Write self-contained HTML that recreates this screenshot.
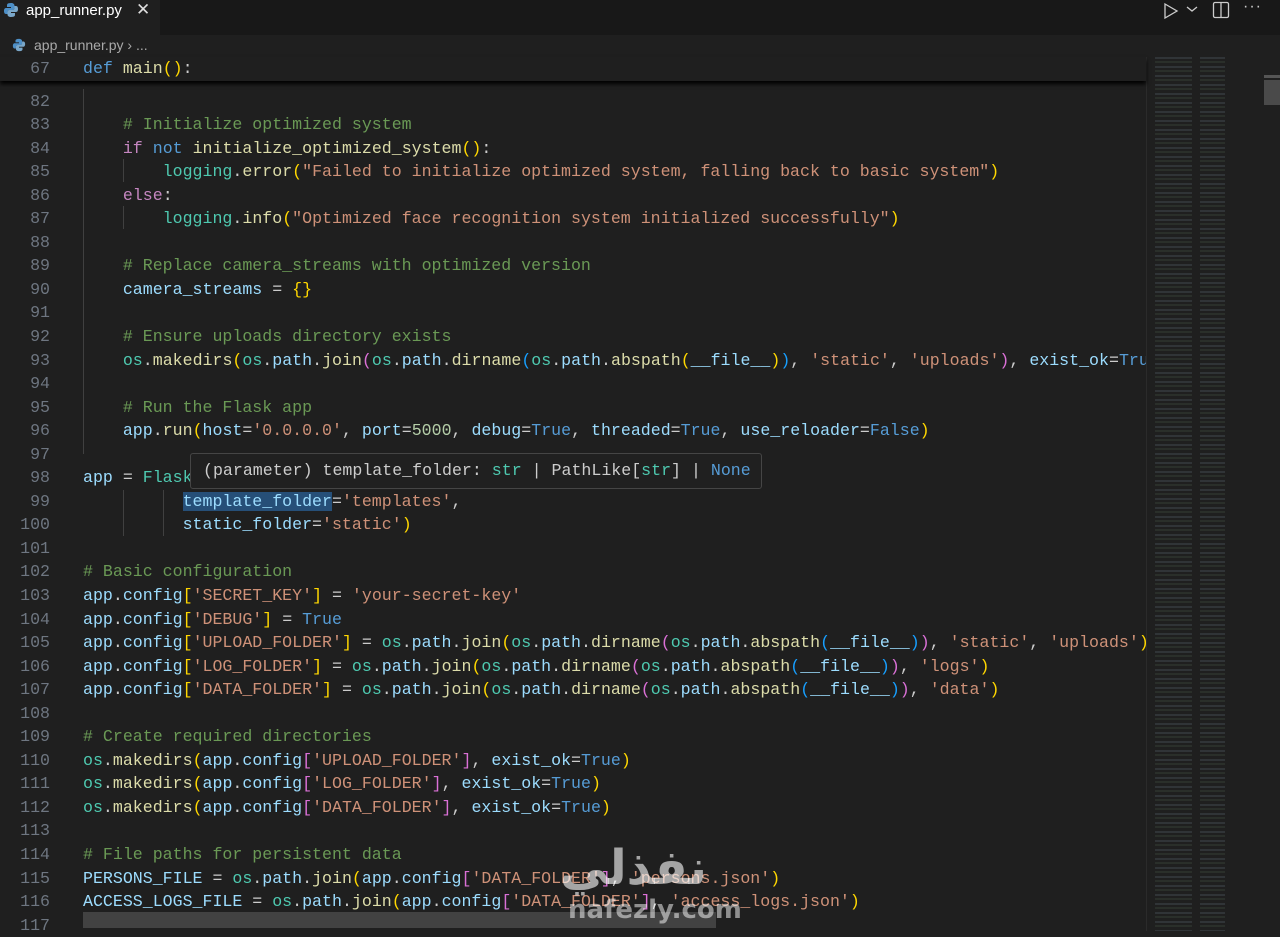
<!DOCTYPE html>
<html><head><meta charset="utf-8"><style>
body{margin:0;width:1280px;height:931px;background:#1f1f1f;overflow:hidden;position:relative;font-family:"Liberation Mono",monospace;}
.tabbar{position:absolute;left:0;top:0;width:1280px;height:35px;background:#181818;}
.tab{position:absolute;left:0;top:0;width:160px;height:35px;background:#1f1f1f;color:#fff;font:15px "Liberation Sans",sans-serif;}
.bc{position:absolute;left:0;top:35px;height:22px;color:#a9a9a9;font:14px "Liberation Sans",sans-serif;}
.code{position:absolute;left:0;top:89.5px;width:1146px;overflow:hidden;}
.ln{position:relative;height:23.55px;line-height:23.55px;font-size:16.6px;white-space:pre;color:#cccccc;}
.ln .no{position:absolute;right:1096px;width:50px;text-align:right;color:#6e7681;}
.ln .tx{position:absolute;left:83px;}
.k{color:#569cd6}.c{color:#6a9955}.f{color:#dcdcaa}.s{color:#ce9178}.v{color:#9cdcfe}.t{color:#4ec9b0}.p{color:#c586c0}.y{color:#ffd700}.m{color:#da70d6}.b{color:#179fff}.n{color:#b5cea8}
.guide{position:absolute;width:1px;background:#404040;}
.sticky{position:absolute;left:0;top:57px;width:1146px;height:24px;background:#1f1f1f;box-shadow:0 3px 4px #000;z-index:3;}
.mini{position:absolute;left:1155px;top:57px;width:95px;height:874px;background:
repeating-linear-gradient(90deg,transparent 0 37px,#1f1f1f 37px 45px,transparent 45px 70px,#1f1f1f 70px 95px),
repeating-linear-gradient(180deg,rgba(140,160,180,.16) 0 2px,transparent 2px 4px,rgba(120,160,120,.12) 4px 6px,transparent 6px 9px);}
.tip{position:absolute;left:190px;top:453px;width:570px;height:34px;background:#202020;border:1px solid #454545;border-radius:3px;z-index:4;}
</style></head><body>
<div class="tabbar"></div>
<div class="tab">
 <svg style="position:absolute;left:3px;top:2px" width="16" height="16" viewBox="0 0 16 16"><path d="M8 1C4 1 4 2.5 4 3.5V5h4v1H3C1.5 6 1 7.5 1 9s.5 3 2 3h1.5v-2c0-1.2 1-2 2-2h3c1 0 2-.8 2-2V3.5C11.5 2 10 1 8 1z" fill="#4d8fc7"/><path d="M8 15c4 0 4-1.5 4-2.5V11H8v-1h5c1.5 0 2-1.5 2-3s-.5-3-2-3h-1.5v2c0 1.2-1 2-2 2h-3c-1 0-2 .8-2 2v2.5C4.5 14 6 15 8 15z" fill="#7aa7c9"/></svg>
 <span style="position:absolute;left:26px;top:2px">app_runner.py</span>
 <span style="position:absolute;left:136px;top:0px;font-size:17px;color:#ddd">✕</span>
</div>
<svg style="position:absolute;left:1162px;top:2px" width="18" height="18" viewBox="0 0 18 18"><path d="M3 2l12 7-12 7z" fill="none" stroke="#ccc" stroke-width="1.3"/></svg>
<svg style="position:absolute;left:1186px;top:4px" width="12" height="10"><path d="M1 3l5 4 5-4" fill="none" stroke="#ccc" stroke-width="1.3"/></svg>
<svg style="position:absolute;left:1212px;top:1px" width="18" height="18"><rect x="1.5" y="1.5" width="15" height="15" rx="1.5" fill="none" stroke="#ccc" stroke-width="1.3"/><path d="M9 2v14" stroke="#ccc" stroke-width="1.3"/></svg>
<span style="position:absolute;left:1243px;top:-2px;color:#ccc;font:16px 'Liberation Sans';letter-spacing:1px">···</span>
<div class="bc">
 <svg style="position:absolute;left:12px;top:3px" width="14" height="14" viewBox="0 0 16 16"><path d="M8 1C4 1 4 2.5 4 3.5V5h4v1H3C1.5 6 1 7.5 1 9s.5 3 2 3h1.5v-2c0-1.2 1-2 2-2h3c1 0 2-.8 2-2V3.5C11.5 2 10 1 8 1z" fill="#4d8fc7"/><path d="M8 15c4 0 4-1.5 4-2.5V11H8v-1h5c1.5 0 2-1.5 2-3s-.5-3-2-3h-1.5v2c0 1.2-1 2-2 2h-3c-1 0-2 .8-2 2v2.5C4.5 14 6 15 8 15z" fill="#7aa7c9"/></svg>
 <span style="position:absolute;left:34px;top:2px;white-space:nowrap">app_runner.py&nbsp;›&nbsp;...</span>
</div>
<div class="sticky"><div class="ln" style="top:0"><span class="no">67</span><span class="tx"><span class="k">def</span> <span class="f">main</span><span class="y">()</span>:</span></div></div>
<div class="guide" style="left:83px;top:89px;height:365px"></div>
<div class="guide" style="left:123px;top:159px;height:23px"></div>
<div class="guide" style="left:123px;top:206px;height:23px"></div>
<div class="guide" style="left:123px;top:490px;height:46px"></div>
<div class="guide" style="left:163px;top:490px;height:46px"></div>
<div class="code">
<div class="ln"><span class="no">82</span></div>
<div class="ln"><span class="no">83</span><span class="tx">    <span class="c"># Initialize optimized system</span></span></div>
<div class="ln"><span class="no">84</span><span class="tx">    <span class="p">if</span> <span class="k">not</span> <span class="f">initialize_optimized_system</span><span class="y">()</span>:</span></div>
<div class="ln"><span class="no">85</span><span class="tx">        <span class="t">logging</span>.<span class="f">error</span><span class="y">(</span><span class="s">"Failed to initialize optimized system, falling back to basic system"</span><span class="y">)</span></span></div>
<div class="ln"><span class="no">86</span><span class="tx">    <span class="p">else</span>:</span></div>
<div class="ln"><span class="no">87</span><span class="tx">        <span class="t">logging</span>.<span class="f">info</span><span class="y">(</span><span class="s">"Optimized face recognition system initialized successfully"</span><span class="y">)</span></span></div>
<div class="ln"><span class="no">88</span></div>
<div class="ln"><span class="no">89</span><span class="tx">    <span class="c"># Replace camera_streams with optimized version</span></span></div>
<div class="ln"><span class="no">90</span><span class="tx">    <span class="v">camera_streams</span> = <span class="y">{}</span></span></div>
<div class="ln"><span class="no">91</span></div>
<div class="ln"><span class="no">92</span><span class="tx">    <span class="c"># Ensure uploads directory exists</span></span></div>
<div class="ln"><span class="no">93</span><span class="tx">    <span class="t">os</span>.<span class="f">makedirs</span><span class="y">(</span><span class="t">os</span>.<span class="v">path</span>.<span class="f">join</span><span class="m">(</span><span class="t">os</span>.<span class="v">path</span>.<span class="f">dirname</span><span class="b">(</span><span class="t">os</span>.<span class="v">path</span>.<span class="f">abspath</span><span class="y">(</span><span class="v">__file__</span><span class="y">)</span><span class="b">)</span>, <span class="s">'static'</span>, <span class="s">'uploads'</span><span class="m">)</span>, <span class="v">exist_ok</span>=<span class="k">True</span></span></div>
<div class="ln"><span class="no">94</span></div>
<div class="ln"><span class="no">95</span><span class="tx">    <span class="c"># Run the Flask app</span></span></div>
<div class="ln"><span class="no">96</span><span class="tx">    <span class="v">app</span>.<span class="f">run</span><span class="y">(</span><span class="v">host</span>=<span class="s">'0.0.0.0'</span>, <span class="v">port</span>=<span class="n">5000</span>, <span class="v">debug</span>=<span class="k">True</span>, <span class="v">threaded</span>=<span class="k">True</span>, <span class="v">use_reloader</span>=<span class="k">False</span><span class="y">)</span></span></div>
<div class="ln"><span class="no">97</span></div>
<div class="ln"><span class="no">98</span><span class="tx"><span class="v">app</span> = <span class="t">Flask</span><span class="y">(</span></span></div>
<div class="ln"><span class="no">99</span><span class="tx">          <span class="v" style="background:#264f78">template_folder</span>=<span class="s">'templates'</span>,</span></div>
<div class="ln"><span class="no">100</span><span class="tx">          <span class="v">static_folder</span>=<span class="s">'static'</span><span class="y">)</span></span></div>
<div class="ln"><span class="no">101</span></div>
<div class="ln"><span class="no">102</span><span class="tx"><span class="c"># Basic configuration</span></span></div>
<div class="ln"><span class="no">103</span><span class="tx"><span class="v">app</span>.<span class="v">config</span><span class="y">[</span><span class="s">'SECRET_KEY'</span><span class="y">]</span> = <span class="s">'your-secret-key'</span></span></div>
<div class="ln"><span class="no">104</span><span class="tx"><span class="v">app</span>.<span class="v">config</span><span class="y">[</span><span class="s">'DEBUG'</span><span class="y">]</span> = <span class="k">True</span></span></div>
<div class="ln"><span class="no">105</span><span class="tx"><span class="v">app</span>.<span class="v">config</span><span class="y">[</span><span class="s">'UPLOAD_FOLDER'</span><span class="y">]</span> = <span class="t">os</span>.<span class="v">path</span>.<span class="f">join</span><span class="y">(</span><span class="t">os</span>.<span class="v">path</span>.<span class="f">dirname</span><span class="m">(</span><span class="t">os</span>.<span class="v">path</span>.<span class="f">abspath</span><span class="b">(</span><span class="v">__file__</span><span class="b">)</span><span class="m">)</span>, <span class="s">'static'</span>, <span class="s">'uploads'</span><span class="y">)</span></span></div>
<div class="ln"><span class="no">106</span><span class="tx"><span class="v">app</span>.<span class="v">config</span><span class="y">[</span><span class="s">'LOG_FOLDER'</span><span class="y">]</span> = <span class="t">os</span>.<span class="v">path</span>.<span class="f">join</span><span class="y">(</span><span class="t">os</span>.<span class="v">path</span>.<span class="f">dirname</span><span class="m">(</span><span class="t">os</span>.<span class="v">path</span>.<span class="f">abspath</span><span class="b">(</span><span class="v">__file__</span><span class="b">)</span><span class="m">)</span>, <span class="s">'logs'</span><span class="y">)</span></span></div>
<div class="ln"><span class="no">107</span><span class="tx"><span class="v">app</span>.<span class="v">config</span><span class="y">[</span><span class="s">'DATA_FOLDER'</span><span class="y">]</span> = <span class="t">os</span>.<span class="v">path</span>.<span class="f">join</span><span class="y">(</span><span class="t">os</span>.<span class="v">path</span>.<span class="f">dirname</span><span class="m">(</span><span class="t">os</span>.<span class="v">path</span>.<span class="f">abspath</span><span class="b">(</span><span class="v">__file__</span><span class="b">)</span><span class="m">)</span>, <span class="s">'data'</span><span class="y">)</span></span></div>
<div class="ln"><span class="no">108</span></div>
<div class="ln"><span class="no">109</span><span class="tx"><span class="c"># Create required directories</span></span></div>
<div class="ln"><span class="no">110</span><span class="tx"><span class="t">os</span>.<span class="f">makedirs</span><span class="y">(</span><span class="v">app</span>.<span class="v">config</span><span class="m">[</span><span class="s">'UPLOAD_FOLDER'</span><span class="m">]</span>, <span class="v">exist_ok</span>=<span class="k">True</span><span class="y">)</span></span></div>
<div class="ln"><span class="no">111</span><span class="tx"><span class="t">os</span>.<span class="f">makedirs</span><span class="y">(</span><span class="v">app</span>.<span class="v">config</span><span class="m">[</span><span class="s">'LOG_FOLDER'</span><span class="m">]</span>, <span class="v">exist_ok</span>=<span class="k">True</span><span class="y">)</span></span></div>
<div class="ln"><span class="no">112</span><span class="tx"><span class="t">os</span>.<span class="f">makedirs</span><span class="y">(</span><span class="v">app</span>.<span class="v">config</span><span class="m">[</span><span class="s">'DATA_FOLDER'</span><span class="m">]</span>, <span class="v">exist_ok</span>=<span class="k">True</span><span class="y">)</span></span></div>
<div class="ln"><span class="no">113</span></div>
<div class="ln"><span class="no">114</span><span class="tx"><span class="c"># File paths for persistent data</span></span></div>
<div class="ln"><span class="no">115</span><span class="tx"><span class="v">PERSONS_FILE</span> = <span class="t">os</span>.<span class="v">path</span>.<span class="f">join</span><span class="y">(</span><span class="v">app</span>.<span class="v">config</span><span class="m">[</span><span class="s">'DATA_FOLDER'</span><span class="m">]</span>, <span class="s">'persons.json'</span><span class="y">)</span></span></div>
<div class="ln"><span class="no">116</span><span class="tx"><span class="v">ACCESS_LOGS_FILE</span> = <span class="t">os</span>.<span class="v">path</span>.<span class="f">join</span><span class="y">(</span><span class="v">app</span>.<span class="v">config</span><span class="m">[</span><span class="s">'DATA_FOLDER'</span><span class="m">]</span>, <span class="s">'access_logs.json'</span><span class="y">)</span></span></div>
<div class="ln"><span class="no">117</span></div>
</div>
<div class="tip"><div class="ln" style="position:absolute;left:12px;top:5px"><span>(parameter) template_folder: </span><span class="t">str</span> | PathLike[<span class="t">str</span>] | <span class="k">None</span></div></div>
<div style="position:absolute;left:83px;top:912px;width:633px;height:16px;background:rgba(121,121,121,.4)"></div>
<div class="mini"></div>
<div style="position:absolute;left:1146px;top:57px;width:1px;height:874px;background:#2b2b2b"></div>
<div style="position:absolute;left:1264px;top:75px;width:16px;height:3px;background:#555"></div>
<div style="position:absolute;left:1264px;top:80px;width:16px;height:25px;background:#4a4a4a"></div>
<div style="position:absolute;left:560px;top:840px;font:bold 48px 'DejaVu Sans',sans-serif;color:rgba(255,255,255,.6);direction:rtl">نفذلي</div>
<div style="position:absolute;left:568px;top:895px;font:bold 26px 'DejaVu Sans',sans-serif;color:rgba(255,255,255,.5)">nafezly.com</div>
</body></html>
